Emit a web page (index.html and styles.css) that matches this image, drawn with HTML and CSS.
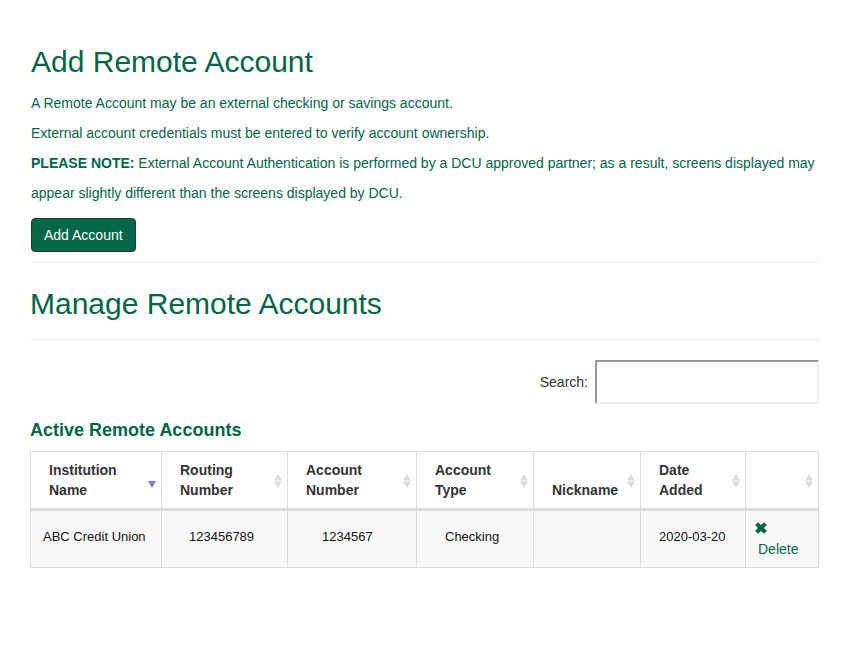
FILE: index.html
```html
<!DOCTYPE html>
<html lang="en">
<head>
<meta charset="utf-8">
<title>Remote Accounts</title>
<link rel="stylesheet" href="styles.css">
</head>
<body>
<svg class="defs" aria-hidden="true">
  <symbol id="sort" viewBox="0 0 8 14"><path d="M4 0L8 6.4H0zM0 7.6H8L4 14z"/></symbol>
  <symbol id="sort-down" viewBox="0 0 8 14"><path d="M0 7H8L4 14z"/></symbol>
</svg>
<main class="page">
  <section class="intro">
    <h1>Add Remote Account</h1>
    <p>A Remote Account may be an external checking or savings account.</p>
    <p>External account credentials must be entered to verify account ownership.</p>
    <p><strong>PLEASE NOTE:</strong> External Account Authentication is performed by a DCU approved partner; as a result, screens displayed may appear slightly different than the screens displayed by DCU.</p>
    <button class="btn" type="button">Add Account</button>
  </section>
  <section class="manage">
    <h1>Manage Remote Accounts</h1>
    <div class="search">
      <label for="search">Search:</label>
      <input id="search" type="search">
    </div>
    <h2 id="active">Active Remote Accounts</h2>
    <table class="accounts" aria-labelledby="active">
      <colgroup>
        <col class="c-name"><col class="c-routing"><col class="c-number"><col class="c-type"><col class="c-nick"><col class="c-date"><col class="c-action">
      </colgroup>
      <thead>
        <tr>
          <th scope="col"><div class="head"><span>Institution<br>Name</span><svg class="sort active"><use href="#sort-down"/></svg></div></th>
          <th scope="col"><div class="head"><span>Routing<br>Number</span><svg class="sort"><use href="#sort"/></svg></div></th>
          <th scope="col"><div class="head"><span>Account<br>Number</span><svg class="sort"><use href="#sort"/></svg></div></th>
          <th scope="col"><div class="head"><span>Account<br>Type</span><svg class="sort"><use href="#sort"/></svg></div></th>
          <th scope="col"><div class="head"><span>Nickname</span><svg class="sort"><use href="#sort"/></svg></div></th>
          <th scope="col"><div class="head"><span>Date<br>Added</span><svg class="sort"><use href="#sort"/></svg></div></th>
          <th scope="col"><div class="head"><span></span><svg class="sort"><use href="#sort"/></svg></div></th>
        </tr>
      </thead>
      <tbody>
        <tr>
          <td class="name">ABC Credit Union</td>
          <td class="routing">123456789</td>
          <td class="number">1234567</td>
          <td class="type">Checking</td>
          <td></td>
          <td class="date">2020-03-20</td>
          <td class="action"><a href="#delete"><svg class="cross" viewBox="0 0 12 12"><path d="M3 0.3L6 3.1L9 0.3L11.9 3L9 6L11.9 9L9 11.7L6 8.9L3 11.7L0.1 9L3 6L0.1 3z"/></svg><span>Delete</span></a></td>
        </tr>
      </tbody>
    </table>
  </section>
</main>
</body>
</html>
```
FILE: styles.css
```css
* { box-sizing: border-box; }

body {
  margin: 0;
  background: #fff;
  color: #333;
  font: 14px/20px "Liberation Sans", Arial, sans-serif;
}

.defs { display: block; width: 0; height: 0; }

.page { padding: 45px 26px 40px 30px; }

h1 {
  margin: 0;
  color: #006747;
  font-size: 30px;
  line-height: 34px;
  font-weight: 400;
}

.intro {
  margin-left: 1px;
  padding-bottom: 9px;
  border-bottom: 1px solid #eee;
}

.intro h1 { margin-bottom: 9px; }

.intro p {
  margin: 0;
  color: #006747;
  line-height: 30px;
}

.btn {
  display: block;
  height: 34px;
  margin-top: 10px;
  padding: 0 12px;
  border: 1px solid #333;
  border-radius: 4px;
  background: #006747;
  color: #fff;
  font: inherit;
}

.manage h1 {
  padding: 25px 0 18px;
  border-bottom: 1px solid #eee;
}

.search {
  display: flex;
  justify-content: flex-end;
  align-items: center;
  gap: 7px;
  margin: 20px 0 16px;
}

.search input {
  width: 224px;
  height: 44px;
  padding: 0 8px;
  border: 2px solid;
  border-color: #999 #eee #eee #999;
  background: #fff;
  font: inherit;
  appearance: none;
}

h2 {
  margin: 0 0 11px;
  color: #006747;
  font-size: 18px;
  line-height: 20px;
}

.accounts {
  width: 100%;
  table-layout: fixed;
  border-spacing: 0;
  border: 1px solid #ddd;
  border-right: 0;
}

.c-routing { width: 126px; }
.c-number { width: 129px; }
.c-type { width: 117px; }
.c-nick { width: 107px; }
.c-date { width: 105px; }
.c-action { width: 73px; }

th, td {
  padding: 0;
  border-right: 1px solid #ddd;
  text-align: left;
}

th { border-bottom: 3px solid #ddd; }

.head {
  display: flex;
  align-items: flex-end;
  justify-content: space-between;
  height: 56px;
  padding: 8px 5px 8px 18px;
}

.sort {
  flex: none;
  width: 8px;
  height: 14px;
  margin-bottom: 12px;
  fill: #ddd;
}

.sort.active { fill: #7b7fe0; }

td {
  height: 56px;
  padding-bottom: 4px;
  background: #f9f9f9;
  color: #111;
  font-size: 13px;
}

.name { padding-left: 12px; }
.routing { padding-left: 27px; }
.number { padding-left: 34px; }
.type { padding-left: 28px; }
.date { padding-left: 18px; }

.action {
  padding: 2px 0 0 9px;
  font-size: 14px;
}

.action a {
  display: flex;
  flex-direction: column;
  gap: 5px;
  color: #006747;
  text-decoration: none;
}

.action span { padding-left: 3px; }

.cross {
  width: 12px;
  height: 12px;
  fill: #006747;
}
```
